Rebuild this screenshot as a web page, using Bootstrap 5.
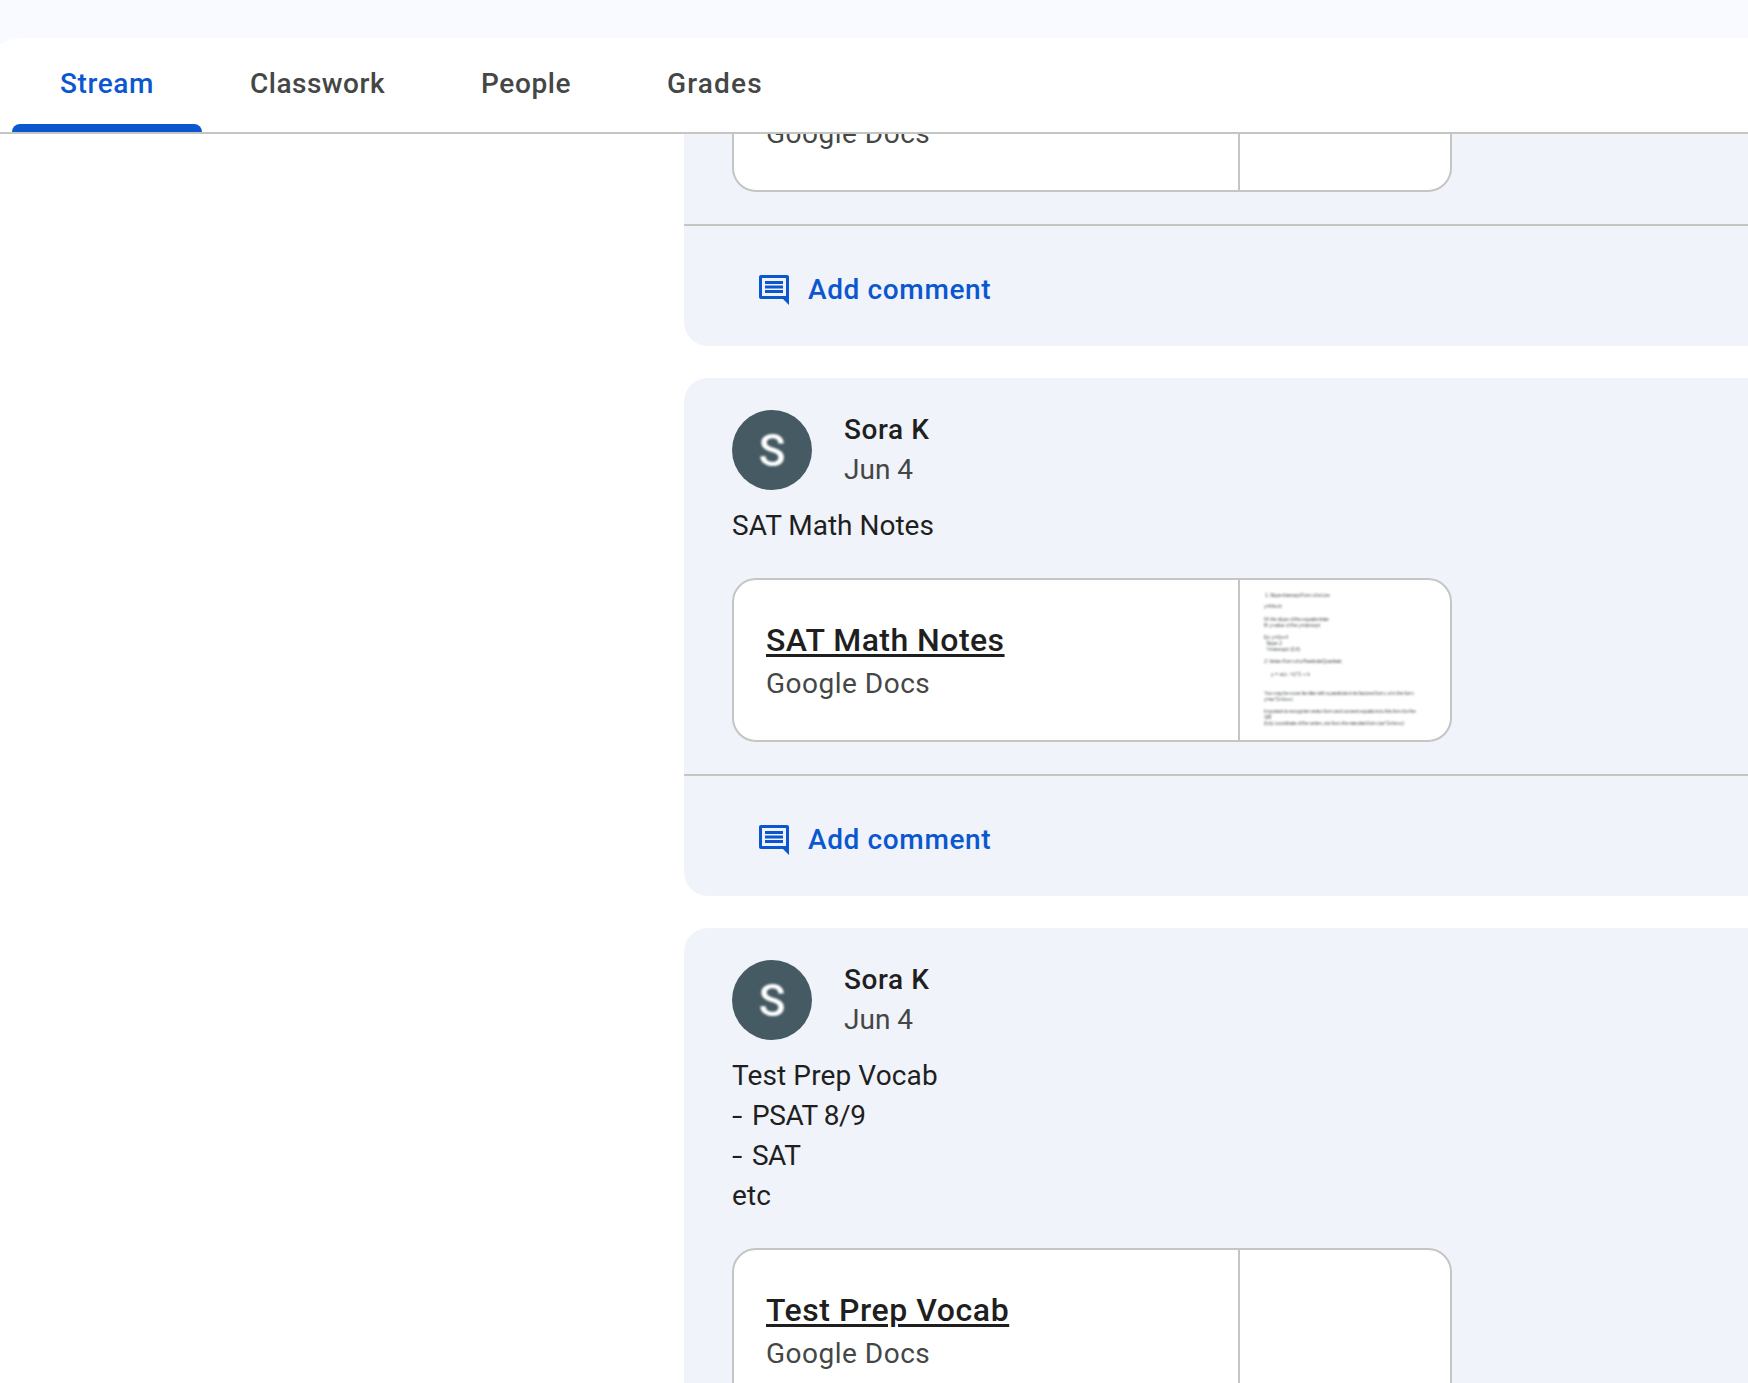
<!DOCTYPE html>
<html lang="en">
<head>
<meta charset="utf-8">
<meta name="viewport" content="width=device-width, initial-scale=1">
<title>Classroom stream</title>
<link href="https://cdn.jsdelivr.net/npm/bootstrap@5.3.0/dist/css/bootstrap.min.css" rel="stylesheet">
<style>
  :root { --line: #c4c6c4; --blue: #0b57d0; --ink: #1f1f1f; --ink-soft: #444746; --panel: #f0f3fa; }
  html, body { height: 100%; }
  body { font-family: Roboto, sans-serif; font-size: 28px; line-height: 40px; color: var(--ink); background: #fff; }

  .app-top { padding-top: 38px; height: 134px; border-bottom: 2px solid var(--line); background: #f8faff; }
  .tab-strip { margin-left: -24px; padding-left: 36px; background: #fff; border-top-left-radius: 48px; height: 94px; }
  .tab-strip .nav-link { height: 94px; padding: 0 48px 2px; color: var(--ink-soft); font-weight: 500; letter-spacing: .6px; }
  .tab-strip .nav-link.active { color: var(--blue); }
  .tab-strip .nav-link.active::after { content: ""; position: absolute; left: 0; right: 0; bottom: 0; height: 8px; border-radius: 8px 8px 0 0; background: var(--blue); }
  .tab-strip .ls-classwork { letter-spacing: .5px; }
  .tab-strip .ls-grades { letter-spacing: 1.15px; }

  /* The list is scrolled so that the first post is partly under the tabs. */
  .stream-list { margin: -170px -48px 0 684px; gap: 32px; }
  .post { background: var(--panel); border-radius: 24px; }
  .post-main { padding: 32px 48px; }
  .avatar { width: 80px; height: 80px; background: #455a62; color: #fff; font-size: 44px; font-weight: 500; line-height: 82px; }
  .avatar span { filter: blur(.8px); }
  .author { font-weight: 500; letter-spacing: .6px; }
  .date { color: var(--ink-soft); }
  .post-text { margin-top: 16px; }
  .ls-post { letter-spacing: .12px; }
  .dash { display: inline-block; transform: scaleX(1.35); transform-origin: left; margin-right: 6px; }
  .ls-exam { letter-spacing: -.4px; }

  .attachment { width: 720px; height: 164px; margin-top: 32px; border: 2px solid var(--line); border-radius: 24px; background: #fff; overflow: hidden; }
  .attachment-info { padding: 36px 32px; width: 504px; }
  .attachment-title { font-size: 32px; line-height: 48px; font-weight: 500; color: var(--ink); letter-spacing: .46px; text-decoration-thickness: 3px; text-underline-offset: 3px; }
  .ls-vocab { letter-spacing: .56px; }
  .attachment-kind { color: var(--ink-soft); letter-spacing: .5px; line-height: 40px; }
  .thumb { width: 212px; border-left: 2px solid var(--line); }
  .thumb-page { filter: blur(.85px); }
  .thumb text { font: 5.6px "Liberation Sans", sans-serif; fill: #5f6368; }

  .post-footer { border-top: 2px solid var(--line); padding: 24px 48px 16px; }
  .comment-btn { height: 80px; padding: 0 24px; gap: 16px; font-size: 28px; font-weight: 500; color: var(--blue); border: 0; letter-spacing: .63px; }
</style>
</head>
<body class="overflow-hidden">
<header class="app-top position-relative z-1">
  <nav class="nav tab-strip flex-nowrap">
    <a class="nav-link active position-relative d-flex align-items-center" href="#">Stream</a>
    <a class="nav-link ls-classwork d-flex align-items-center" href="#">Classwork</a>
    <a class="nav-link d-flex align-items-center" href="#">People</a>
    <a class="nav-link ls-grades d-flex align-items-center" href="#">Grades</a>
  </nav>
</header>

<svg class="d-none" aria-hidden="true">
  <symbol id="comment-icon" viewBox="0 0 24 24">
    <path fill="currentColor" d="M22 3.3C22 2.55 21.45 2 20.7 2H3.3C2.55 2 2 2.55 2 3.3v13.4c0 .75.55 1.3 1.3 1.3H18l4 4V3.3zM20 4v12H4V4h16zM18 12H6v2h12v-2zm0-3H6v2h12V9zm0-3H6v2h12V6z"/>
  </symbol>
</svg>

<main class="overflow-hidden">
  <div class="stream-list d-flex flex-column">

    <article class="post">
      <div class="post-main">
        <div class="attachment d-flex">
          <div class="attachment-info">
            <div class="attachment-title">&nbsp;</div>
            <div class="attachment-kind">Google Docs</div>
          </div>
          <div class="thumb"></div>
        </div>
      </div>
      <div class="post-footer">
        <button class="btn comment-btn d-flex align-items-center" type="button"><svg width="36" height="36"><use href="#comment-icon"/></svg>Add comment</button>
      </div>
    </article>

    <article class="post">
      <div class="post-main">
        <div class="d-flex">
          <div class="avatar rounded-circle text-center flex-shrink-0"><span class="d-block">S</span></div>
          <div class="ps-2 ms-4">
            <div class="author">Sora K</div>
            <div class="date">Jun 4</div>
          </div>
        </div>
        <div class="post-text">SAT Math Notes</div>
        <div class="attachment d-flex">
          <div class="attachment-info">
            <a class="attachment-title d-block" href="#">SAT Math Notes</a>
            <div class="attachment-kind">Google Docs</div>
          </div>
          <div class="thumb">
            <div class="thumb-page">
            <svg class="d-block" width="210" height="160" viewBox="0 0 210 160">
              <g>
                <text x="25" y="16.5" textLength="65">1. Slope-Intercept Form of a Line</text>
                <text x="24" y="28" textLength="18">y=Mx+b</text>
                <text x="24" y="40.5" textLength="65">M: the slope of the equation/rate</text>
                <text x="24" y="46.5" textLength="56">B: y-value of the y-intercept</text>
                <text x="24" y="58.5" textLength="24">Ex: y=2x+4</text>
                <text x="26" y="64.8" textLength="16">Slope: 2</text>
                <text x="26" y="71" textLength="34">Y-intercept: (0,4)</text>
                <text x="24" y="83" textLength="78">2. Vertex Form of a Parabola/Quadratic</text>
                <text x="31" y="95.5" textLength="39">y = a(x - h)^2 + k</text>
                <text x="24" y="114.5" textLength="150">You may be more familiar with a parabola in its factored form, or in the form</text>
                <text x="24" y="120.5" textLength="29">y=ax^2+bx+c</text>
                <text x="24" y="133" textLength="152">Important to recognize vertex form and convert equations to this form for the</text>
                <text x="24" y="138.8" textLength="8">SAT</text>
                <text x="24" y="145.2" textLength="140">(h,k): coordinate of the vertex, a is from the standard form (ax^2+bx+c)</text>
              </g>
            </svg>
            </div>
          </div>
        </div>
      </div>
      <div class="post-footer">
        <button class="btn comment-btn d-flex align-items-center" type="button"><svg width="36" height="36"><use href="#comment-icon"/></svg>Add comment</button>
      </div>
    </article>

    <article class="post">
      <div class="post-main">
        <div class="d-flex">
          <div class="avatar rounded-circle text-center flex-shrink-0"><span class="d-block">S</span></div>
          <div class="ps-2 ms-4">
            <div class="author">Sora K</div>
            <div class="date">Jun 4</div>
          </div>
        </div>
        <div class="post-text">
          <div class="ls-post">Test Prep Vocab</div>
          <div class="ls-exam"><span class="dash">-</span> PSAT 8/9</div>
          <div class="ls-exam"><span class="dash">-</span> SAT</div>
          <div class="ls-post">etc</div>
        </div>
        <div class="attachment d-flex">
          <div class="attachment-info">
            <a class="attachment-title ls-vocab d-block" href="#">Test Prep Vocab</a>
            <div class="attachment-kind">Google Docs</div>
          </div>
          <div class="thumb"></div>
        </div>
      </div>
    </article>

  </div>
</main>
<script src="https://cdn.jsdelivr.net/npm/bootstrap@5.3.0/dist/js/bootstrap.bundle.min.js"></script>
</body>
</html>
